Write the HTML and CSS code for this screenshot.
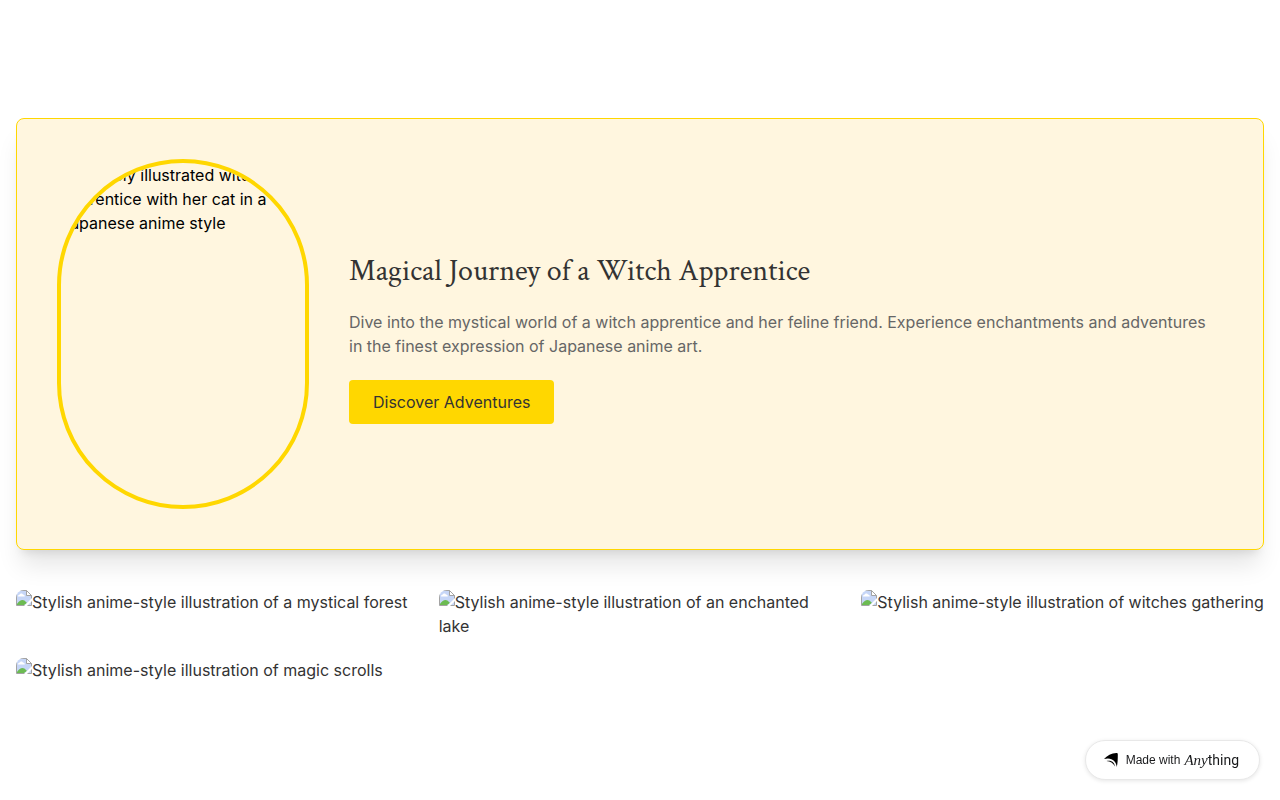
FILE: index.html
```html
<!DOCTYPE html>
<html lang="en">
<head>
<meta charset="utf-8">
<meta name="viewport" content="width=device-width, initial-scale=1">
<title>Magical Journey of a Witch Apprentice</title>
<link rel="stylesheet" href="styles.css">
</head>
<body>
<svg class="defs" aria-hidden="true">
  <symbol id="picture" viewBox="0 0 16 16">
    <path d="M.5.5h10l5 5v10H.5z" fill="#c6d6f7" stroke="#a3a3a3"/>
    <path d="M2 6.500c0-1.200.8-2 1.800-2C4.200 3.200 6.500 3 7 4.600c1.200 0 1.800.8 1.800 1.900z" fill="#fff"/>
    <path d="M1 15v-1c3-5 7-5 9-2l1 1-3 2z" fill="#6cbb52"/>
    <path d="M10.500.5v5h5z" fill="#fff" stroke="#a3a3a3"/>
    <path d="M8 16l8-8v3l-5 5z" fill="#fff"/>
  </symbol>
</svg>
<main class="page">
  <section class="hero">
    <div class="portrait">Intricately illustrated witch apprentice with her cat in a Japanese anime style</div>
    <div class="intro">
      <h1 class="title">Magical Journey of a Witch Apprentice</h1>
      <p class="lead">Dive into the mystical world of a witch apprentice and her feline friend. Experience enchantments and adventures in the finest expression of Japanese anime art.</p>
      <button class="cta" type="button">Discover Adventures</button>
    </div>
  </section>
  <section class="gallery">
    <div class="tile"><svg class="picture" aria-hidden="true"><use href="#picture"/></svg>Stylish anime-style illustration of a mystical forest</div>
    <div class="tile"><svg class="picture" aria-hidden="true"><use href="#picture"/></svg>Stylish anime-style illustration of an enchanted lake</div>
    <div class="tile"><svg class="picture" aria-hidden="true"><use href="#picture"/></svg>Stylish anime-style illustration of witches gathering</div>
    <div class="tile"><svg class="picture" aria-hidden="true"><use href="#picture"/></svg>Stylish anime-style illustration of magic scrolls</div>
  </section>
</main>
<a class="badge" href="#">
  <svg class="badge-mark" viewBox="0 0 16 16" aria-hidden="true"><path d="M1 7C4 3.600 8.500 1.300 13.400 1c1 0 1.400.4 1.400 1.300 0 4.700-.1 9-1 12.700C13.300 9 8.500 4.800 1 7z"/><path d="M3.500 9C8 7.800 11.300 10 12 14.400 10 10.900 7.500 9.600 3.500 9z"/></svg>
  <span class="badge-text">Made with</span>
  <span class="brand"><span class="brand-script">Any</span>thing</span>
</a>
</body>
</html>
```
FILE: styles.css
```css
* { box-sizing: border-box; }

body {
  margin: 0;
  background: #fff;
  color: #333;
  font: 16px/24px Inter, sans-serif;
}

.defs {
  position: absolute;
  width: 0;
  height: 0;
}

.page {
  display: flex;
  flex-direction: column;
  justify-content: center;
  gap: 40px;
  min-height: 100vh;
  padding: 16px;
}

.hero {
  display: flex;
  align-items: center;
  gap: 40px;
  padding: 40px;
  border: 1px solid #ffd700;
  border-radius: 8px;
  background: #fff6df;
  box-shadow: 0 20px 25px -5px rgba(0, 0, 0, 0.1), 0 8px 10px -6px rgba(0, 0, 0, 0.1);
}

.portrait {
  flex: 0 0 252px;
  height: 350px;
  border: 4px solid #ffd700;
  border-radius: 126px;
  overflow: hidden;
  color: #000;
}

.intro { flex: 1; }

.title {
  margin: 0 0 10px;
  font: 400 30px/56px "Crimson Text", "Liberation Serif", serif;
}

.lead {
  margin: 0 0 22px;
  color: #666;
}

.cta {
  display: block;
  padding: 10px 24px;
  border: 0;
  border-radius: 4px;
  background: #ffd700;
  color: #333;
  font: inherit;
}

.gallery {
  display: grid;
  grid-template-columns: repeat(3, 1fr);
  gap: 20px;
}

.tile {
  border-radius: 8px;
  overflow: hidden;
}

.picture {
  width: 16px;
  height: 16px;
  vertical-align: 2px;
}

.badge {
  position: fixed;
  right: 20px;
  bottom: 20px;
  display: flex;
  align-items: center;
  height: 40px;
  padding: 0 20px 0 17px;
  border: 1px solid #e8e8e8;
  border-radius: 20px;
  background: #fff;
  box-shadow: 0 1px 4px rgba(0, 0, 0, 0.1);
  color: #18191b;
  text-decoration: none;
}

.badge-mark {
  width: 16px;
  height: 16px;
  margin-right: 7px;
}

.badge-text {
  margin-right: 4px;
  font: 12px/16px "Liberation Sans", sans-serif;
}

.brand { font: 14px/20px Roboto, sans-serif; }

.brand-script { font: italic 15px/20px "Liberation Serif", serif; }
```
